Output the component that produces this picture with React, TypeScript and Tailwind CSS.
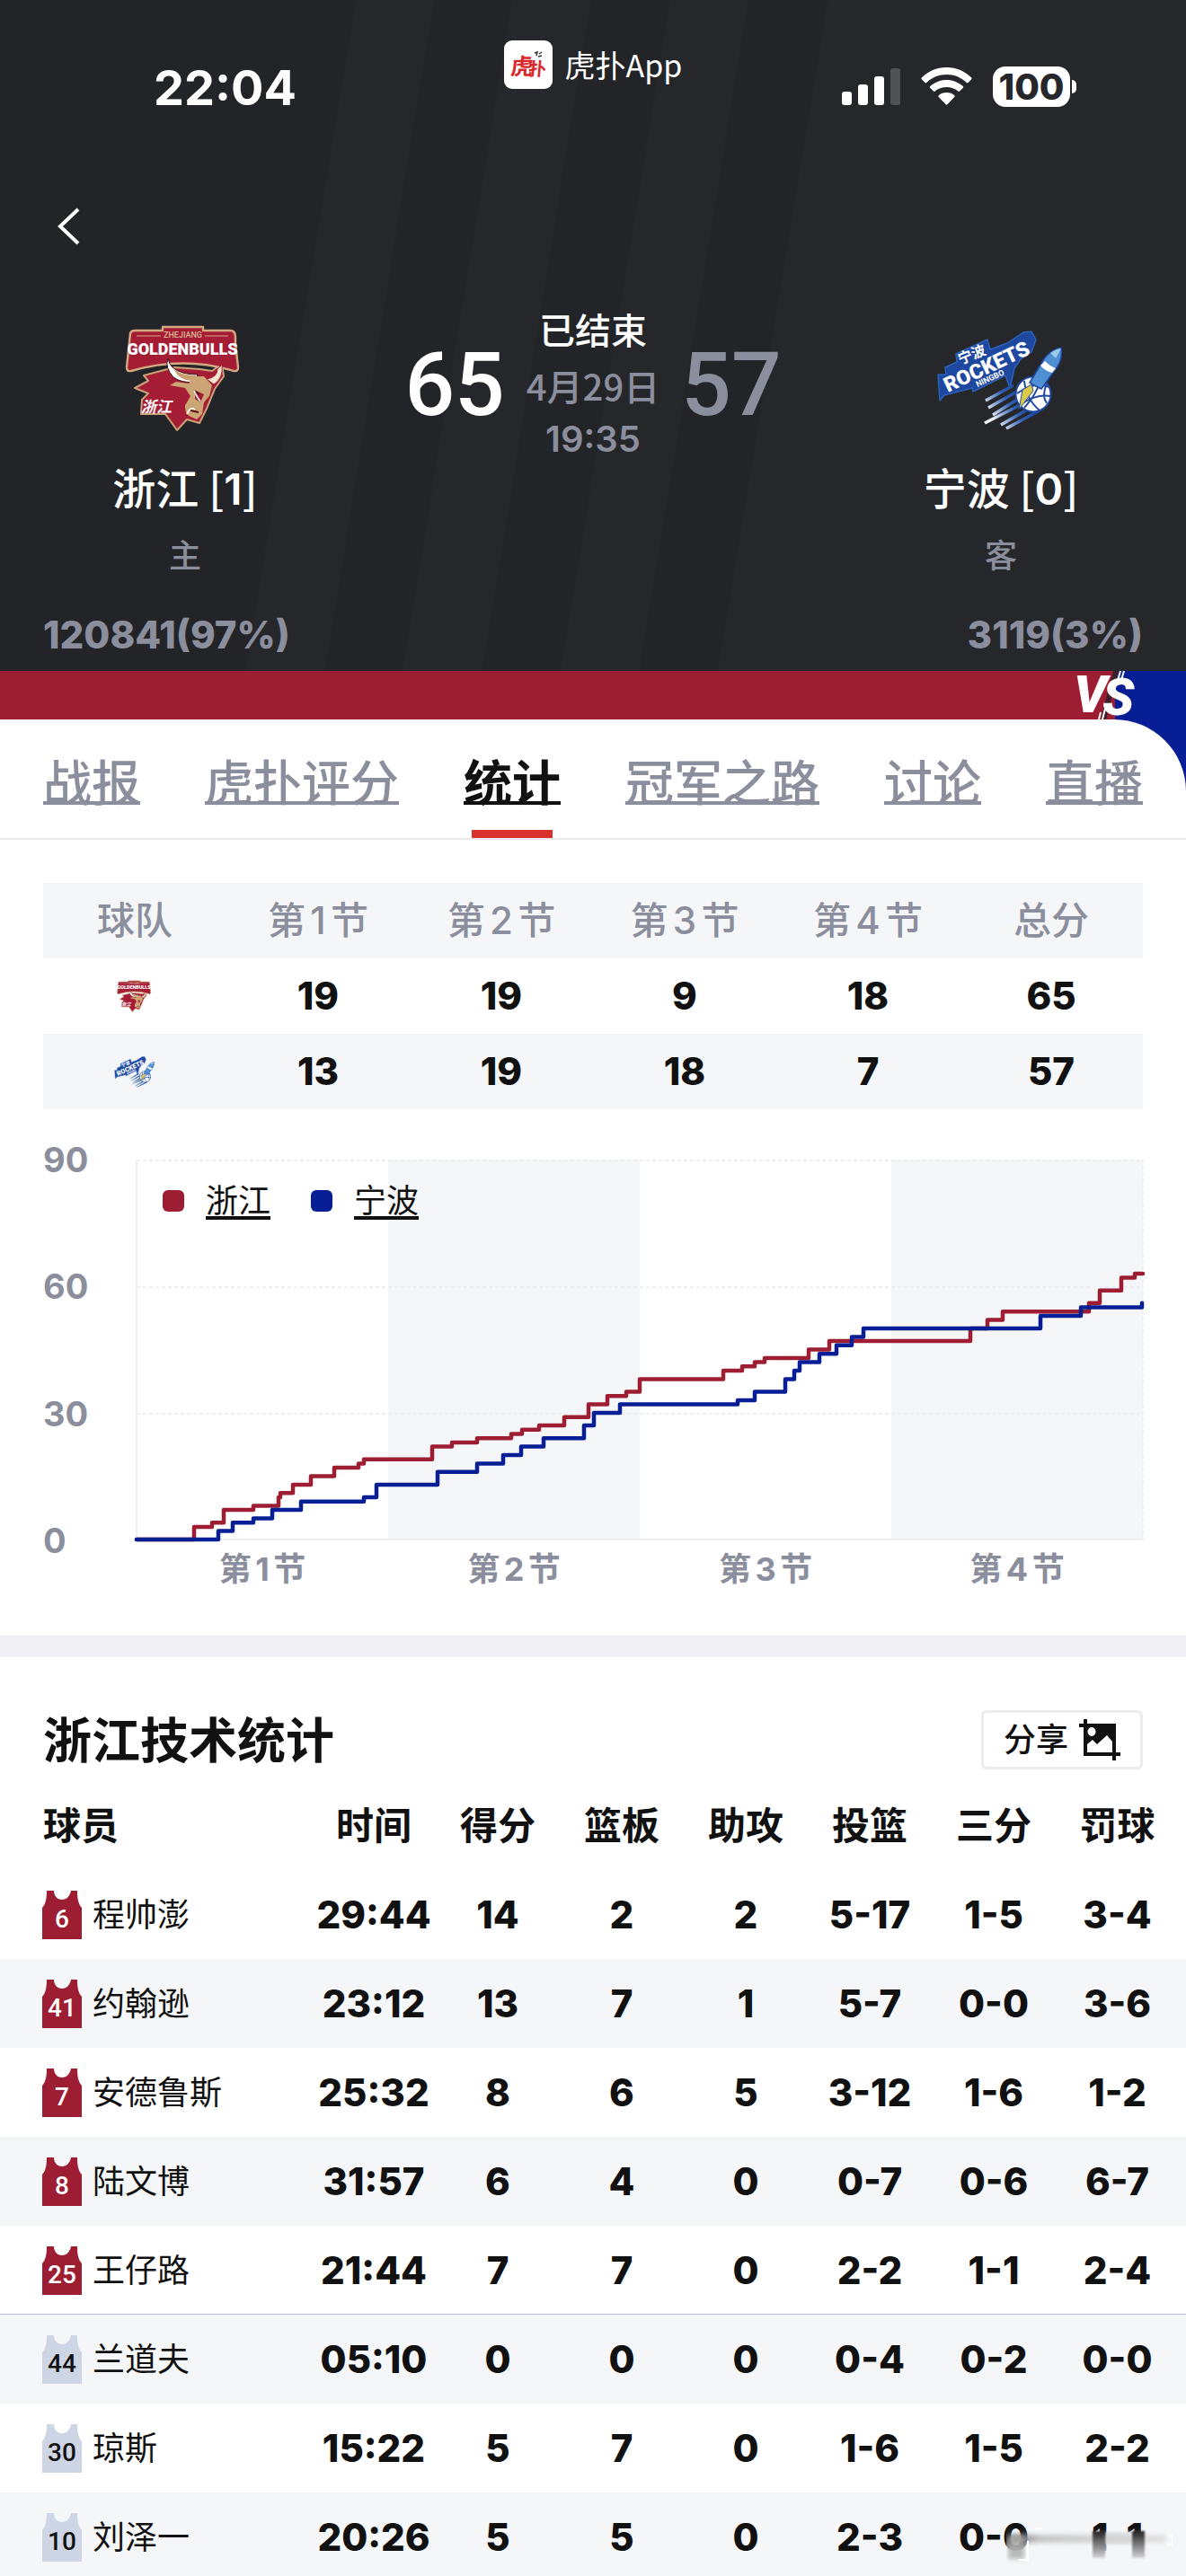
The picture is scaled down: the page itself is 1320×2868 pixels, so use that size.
import type { ReactNode } from "react";

const TABS = ["战报", "虎扑评分", "统计", "冠军之路", "讨论", "直播"];
const ACTIVE_TAB = "统计";

const QUARTERS = ["第1节", "第2节", "第3节", "第4节"];

const QUARTER_SCORES = [
  { team: "浙江", home: true, scores: [19, 19, 9, 18, 65] },
  { team: "宁波", home: false, scores: [13, 19, 18, 7, 57] },
];

const STAT_COLUMNS = ["时间", "得分", "篮板", "助攻", "投篮", "三分", "罚球"];

const PLAYERS = [
  { no: 6, name: "程帅澎", starter: true, stats: ["29:44", "14", "2", "2", "5-17", "1-5", "3-4"] },
  { no: 41, name: "约翰逊", starter: true, stats: ["23:12", "13", "7", "1", "5-7", "0-0", "3-6"] },
  { no: 7, name: "安德鲁斯", starter: true, stats: ["25:32", "8", "6", "5", "3-12", "1-6", "1-2"] },
  { no: 8, name: "陆文博", starter: true, stats: ["31:57", "6", "4", "0", "0-7", "0-6", "6-7"] },
  { no: 25, name: "王仔路", starter: true, stats: ["21:44", "7", "7", "0", "2-2", "1-1", "2-4"] },
  { no: 44, name: "兰道夫", starter: false, stats: ["05:10", "0", "0", "0", "0-4", "0-2", "0-0"] },
  { no: 30, name: "琼斯", starter: false, stats: ["15:22", "5", "7", "0", "1-6", "1-5", "2-2"] },
  { no: 10, name: "刘泽一", starter: false, stats: ["20:26", "5", "5", "0", "2-3", "0-0", "1-1"] },
];

// [x on the time axis (0-1120), total score from there on]
const HOME_STEPS: [number, number][] = [
  [64, 3], [84, 4], [97, 7], [130, 8], [158, 10], [160, 11], [174, 13], [194, 15],
  [220, 17], [247, 18], [253, 19], [329, 22], [351, 23], [379, 24], [417, 25],
  [429, 26], [448, 27], [476, 29], [503, 32], [524, 34], [545, 35], [560, 38],
  [653, 40], [674, 41], [688, 42], [699, 43], [748, 45], [771, 47], [928, 50],
  [947, 52], [964, 54], [1060, 56], [1072, 59], [1096, 62], [1111, 63], [1120, 63],
];

const AWAY_STEPS: [number, number][] = [
  [91, 2], [107, 4], [130, 5], [151, 7], [183, 9], [253, 10], [267, 13], [335, 16],
  [379, 18], [408, 20], [428, 22], [453, 24], [498, 27], [509, 30], [538, 32],
  [669, 33], [688, 35], [722, 38], [732, 40], [738, 42], [760, 44], [779, 46],
  [796, 48], [809, 50], [1006, 53], [1051, 55], [1119, 56],
];

function stepPath(steps: [number, number][]) {
  const y = (v: number) => 423 - v * 4.7;
  return steps.reduce((d, [x, v]) => `${d} H${x} V${y(v)}`, "M0 423");
}

function BullsLogo({ className }: { className?: string }) {
  return (
    <svg className={className} viewBox="0 0 160 140" role="img" aria-label="浙江">
      <path d="M68 58 L34 67 L39 73 L24 81 L39 87 L32 94 L31 110 L58 110 L71 128 L82 116 L96 120 L104 104 L113 82 L123 68 L121 54 L110 62 L96 60 Z" fill="#a51d35" stroke="#c9a277" strokeWidth="2" strokeLinejoin="round" />
      <path d="M19 20 Q20 17 24 17 L55 17 L55 13 L100 13 L100 17 L130 17 Q136 17 136 24 L136 31 L139 58 Q139 63 134 62 Q78 45 20 62 Q15 63 15 58 Z" fill="#a51d35" stroke="#d3a982" strokeWidth="2.4" strokeLinejoin="round" />
      <path d="M26 23 H53 M102 23 H128" stroke="#d3a982" strokeWidth="1.2" />
      <text x="77.5" y="25" textAnchor="middle" fontSize="9" fill="#dbb793" className="font-['Roboto',sans-serif] font-medium">ZHEJIANG</text>
      <text x="77" y="44" textAnchor="middle" fontSize="18" fill="#fff" className="font-['Roboto',sans-serif] font-black">GOLDENBULLS</text>
      <path d="M61 48 Q57 58 67 69 Q77 76 90 74 L94 66 Q75 66 66 58 Q62 54 61 48 Z" fill="#fff" stroke="#3b1217" strokeWidth="1" />
      <path d="M67 60 Q76 67 92 67 L89 73 Q75 74 67 60 Z" fill="#c9a06f" />
      <path d="M121 55 Q123 70 112 77 L104 71 Q116 69 116 60 Z" fill="#f4e4cf" stroke="#a51d35" strokeWidth="1" />
      <path d="M89 68 L101 68 L110 78 L107 90 L101 97 L99 110 L93 116 L84 112 L78 104 L86 90 L80 81 L63 78 L70 74 L84 76 Z" fill="#cba674" />
      <path d="M67 83 Q79 79 83 91 Q78 98 81 108 L72 116 L66 102 Z M92 84 L101 88 L97 97 L91 93 Z" fill="#a51d35" />
      <path d="M90 84 L96 88 M86 106 L95 108" stroke="#5c0f1d" strokeWidth="2" />
      <path d="M90 84 Q93 91 97 96 M82 110 Q86 101 91 105" stroke="#fff" strokeWidth="1.6" fill="none" />
      <text x="31" y="108" fontSize="17" fill="#fff" className="font-['Noto_Sans_CJK_SC',sans-serif] font-bold italic">浙江</text>
    </svg>
  );
}

function RocketsLogo({ className }: { className?: string }) {
  return (
    <svg className={className} viewBox="0 0 170 130" role="img" aria-label="宁波">
      <defs>
        <linearGradient id="flame" x1="67" y1="118" x2="110" y2="86" gradientUnits="userSpaceOnUse">
          <stop offset="0" stopColor="#fff" />
          <stop offset="0.25" stopColor="#dfe9f6" />
          <stop offset="0.7" stopColor="#2f5fb0" />
          <stop offset="1" stopColor="#1e48a0" />
        </linearGradient>
      </defs>
      <path d="M15 61 L24 61 L23 53 L36 47 L35 38 L70 22 L73 33 L92 26 L110 14 L119 13 L124 22 L119 36 L107 44 L100 54 L95 76 L90 62 L54 80 L53 76 L22 84 L17 90 Z" fill="#1e48a0" stroke="#2c62b8" strokeWidth="1.5" strokeLinejoin="round" />
      <g fill="#fff">
        <text transform="translate(26 81) rotate(-25)" fontSize="23" className="font-['Roboto',sans-serif] font-black">ROCKETS</text>
        <text transform="translate(59 75) rotate(-25)" fontSize="9" className="font-['Roboto',sans-serif] font-bold">NINGBO</text>
        <text transform="translate(40 50) rotate(-22)" fontSize="16" className="font-['Noto_Sans_CJK_SC',sans-serif] font-bold">宁波</text>
      </g>
      <g stroke="url(#flame)" strokeWidth="3.6">
        <path d="M68 90 L99 73" />
        <path d="M71 98 L103 80" />
        <path d="M76 106 L106 87" />
        <path d="M67 115 L112 92" />
        <path d="M85 117 L118 98" />
        <path d="M91 121 L128 101" />
      </g>
      <circle cx="121" cy="83" r="19.5" fill="#fff" stroke="#1e48a0" strokeWidth="2" />
      <path d="M103 82 Q122 68 139 75 M107 94 Q125 82 141 85 M111 68 Q113 88 128 101 M130 66 Q124 84 111 98 M136 71 Q130 85 136 93" stroke="#1e48a0" strokeWidth="2" fill="none" />
      <path d="M105 100 L109 78 L119 72 L121 79 Z" fill="#d9c94a" stroke="#1e48a0" strokeWidth="1" />
      <path d="M117 70 L134 42 Q142 33 152 31 Q154 42 148 52 L130 77 L122 73 Z" fill="#4f8fd3" stroke="#1e48a0" strokeWidth="1.5" />
      <path d="M134 46 Q140 52 146 54 L142 59 Q134 57 129 51 Z" fill="#fff" />
      <path d="M140 37 Q147 32 152 32 L146 43 Z" fill="#9cc8ec" />
    </svg>
  );
}

function StatusBar() {
  return (
    <div className="grid h-[150px] grid-cols-3 items-start">
      <div className="pt-[66px] pl-[171px] text-[54px] leading-[64px] font-bold">22:04</div>
      <div className="flex items-center justify-center gap-[14px] pt-[45px]">
        <svg className="h-[54px] w-[54px]" viewBox="0 0 54 54" aria-hidden="true">
          <rect width="54" height="54" rx="9" fill="#fff" />
          <g transform="skewX(-5)">
            <text x="10" y="38" fontSize="25" fill="#d8282c" className="font-['Noto_Sans_CJK_SC',sans-serif] font-bold">虎</text>
            <text x="30" y="39" fontSize="20" fill="#d8282c" className="font-['Noto_Sans_CJK_SC',sans-serif] font-bold">扑</text>
          </g>
          <path d="M34 14 l3 -1 l-1 4 M39 15 l3 -2 M38 18 l4 -1" stroke="#333" strokeWidth="1.5" fill="none" />
        </svg>
        <span className="text-[34px] leading-[54px] font-['Noto_Sans_CJK_SC',sans-serif]">虎扑App</span>
      </div>
      <div className="flex items-center justify-end gap-[23px] pt-[74px] pr-[122px]">
        <svg className="h-[45px] w-[65px]" viewBox="0 0 65 45" fill="#fff" aria-hidden="true">
          <rect x="0" y="28" width="11" height="15" rx="3" />
          <rect x="18" y="20" width="11" height="23" rx="3" />
          <rect x="36" y="11" width="11" height="32" rx="3" />
          <rect x="54" y="2" width="11" height="41" rx="3" opacity="0.2" />
        </svg>
        <svg className="h-[45px] w-[57px]" viewBox="0 0 57 45" fill="#fff" aria-hidden="true">
          <path d="M28.500 1 C17.500 1 8 5.300 0.800 12.500 Q0 13.400 0.800 14.300 L4.500 18 Q5.300 18.800 6.200 18 C12 12.300 20 9 28.500 9 C37 9 45 12.300 50.800 18 Q51.700 18.800 52.500 18 L56.200 14.300 Q57 13.400 56.200 12.500 C49 5.300 39.500 1 28.500 1 Z" />
          <path d="M28.500 15 C21.500 15 15 17.700 10.200 22.100 Q9.300 23 10.200 23.900 L14 27.600 Q14.800 28.400 15.700 27.600 C19.200 24.600 23.600 23 28.500 23 C33.400 23 37.800 24.600 41.300 27.600 Q42.200 28.400 43 27.600 L46.800 23.900 Q47.700 23 46.800 22.100 C42 17.700 35.500 15 28.500 15 Z" />
          <path d="M28.500 29 C25 29 22 30.200 19.700 32.200 Q18.800 33 19.700 33.900 L27.600 42.300 Q28.500 43.200 29.400 42.300 L37.300 33.900 Q38.200 33 37.300 32.200 C35 30.200 32 29 28.500 29 Z" />
        </svg>
        <div className="flex items-center gap-[2px]">
          <span className="flex h-[45px] w-[86px] items-center justify-center rounded-[14px] bg-white text-[40px] leading-[45px] font-extrabold text-[#26272b]">100</span>
          <span className="h-[15px] w-[5px] rounded-r-full bg-white" />
        </div>
      </div>
    </div>
  );
}

function TeamColumn({ logo, name, wins, side }: { logo: ReactNode; name: string; wins: number; side: string }) {
  return (
    <div className="flex flex-1 flex-col items-center pt-3">
      {logo}
      <div className="mt-4 h-[68px] text-[48px] leading-[68px] font-medium font-['Noto_Sans_CJK_SC',sans-serif]">
        {name} [<span className="font-['Inter',sans-serif] font-semibold">{wins}</span>]
      </div>
      <div className="mt-5 text-[36px] leading-[48px] font-medium text-[#8b8e9c]">{side}</div>
    </div>
  );
}

function MatchHeader() {
  return (
    <header className="relative bg-[#232427] text-white">
      <svg className="absolute inset-0 h-full w-full" viewBox="0 0 1320 801" preserveAspectRatio="none" fill="#26272b" aria-hidden="true">
        <path d="M396 0 H483 L353 801 H264 Z M570 0 H658 L528 801 H439 Z M746 0 H833 L703 801 H615 Z M921 0 H1320 V801 H790 Z" />
      </svg>
      <div className="relative">
        <StatusBar />
        <div className="flex h-[189px] items-start px-12 pt-20">
          <button type="button" aria-label="返回" className="-ml-1 px-4">
            <svg className="h-[44px] w-[30px]" viewBox="0 0 30 44" fill="none" stroke="#fff" strokeWidth="4" aria-hidden="true">
              <path d="M27 3 L7 22 L27 41" />
            </svg>
          </button>
        </div>
        <div className="flex items-start">
          <TeamColumn logo={<BullsLogo className="h-[140px] w-[160px]" />} name="浙江" wins={1} side="主" />
          <div className="flex w-[496px] items-center justify-center gap-6">
            <span className="text-[98px] leading-[120px] font-medium font-['Roboto',sans-serif]">65</span>
            <div className="text-center text-[40px] leading-[60px] font-medium text-[#8b8e9c]">
              <div className="text-white">已结束</div>
              <div className="whitespace-nowrap font-['Noto_Sans_CJK_SC',sans-serif]">4月29日</div>
              <div className="font-semibold">19:35</div>
            </div>
            <span className="text-[98px] leading-[120px] font-medium text-[#8b8e9c] font-['Roboto',sans-serif]">57</span>
          </div>
          <TeamColumn logo={<RocketsLogo className="h-[140px] w-[170px]" />} name="宁波" wins={0} side="客" />
        </div>
        <div className="flex justify-between px-12 pt-10 pb-4 text-[42px] leading-[48px] font-extrabold text-[#8b8e9c]">
          <span>120841(97%)</span>
          <span>3119(3%)</span>
        </div>
      </div>
      <div className="relative flex h-[54px] bg-[#081e95]">
        <div className="w-[94%] bg-[#9d1e33]" />
        <svg className="absolute -top-2 right-[43px] h-[70px] w-[84px]" viewBox="0 -8 84 70" role="img" aria-label="VS">
          <path d="M52 0 L38 54 H32 L46 0 Z" fill="#3a2028" />
          <g className="font-['Roboto',sans-serif] font-black italic" fill="#fff" fontSize="58">
            <text x="2" y="46">V</text>
            <text x="34" y="49">S</text>
          </g>
          <path d="M54 0 L50 14 M37 42 L34 54 M58 0 L55 10 M32 46 L30 54" stroke="#fff" strokeWidth="2" />
        </svg>
      </div>
    </header>
  );
}

function TabBar() {
  return (
    <div className="relative bg-[#081e95]">
      <nav className="rounded-tr-[80px] border-b-2 border-[#ebebee] bg-white">
        <ul className="flex justify-between px-12">
          {TABS.map((tab) => {
            const active = tab === ACTIVE_TAB;
            return (
              <li key={tab} className="relative flex h-[132px] items-center pt-3">
                <a
                  href="#"
                  aria-current={active ? "page" : undefined}
                  className={
                    active
                      ? "text-[54px] leading-[72px] font-bold text-[#111] underline decoration-4 underline-offset-0 [text-decoration-skip-ink:none]"
                      : "text-[54px] leading-[72px] font-medium text-[#8b8e9c] underline decoration-4 underline-offset-0 [text-decoration-skip-ink:none]"
                  }
                >
                  {tab}
                </a>
                {active && <span className="absolute bottom-0 left-1/2 h-[9px] w-[90px] -translate-x-1/2 bg-[#d8302b]" />}
              </li>
            );
          })}
        </ul>
      </nav>
    </div>
  );
}

function QuarterTable() {
  return (
    <table className="w-full table-fixed text-center">
      <thead>
        <tr className="h-[84px] bg-[#f5f6f8] text-[42px] leading-[56px] text-[#8b8e9c] [text-autospace:normal]">
          {["球队", ...QUARTERS, "总分"].map((label) => (
            <th key={label} scope="col" className="p-0 font-medium">{label}</th>
          ))}
        </tr>
      </thead>
      <tbody>
        {QUARTER_SCORES.map(({ team, home, scores }) => (
          <tr key={team} className="h-[84px] text-[42px] leading-[56px] font-extrabold even:bg-[#f5f6f8]">
            <th scope="row" className="p-0">
              {home ? <BullsLogo className="mx-auto h-[42px] w-[54px]" /> : <RocketsLogo className="mx-auto h-[42px] w-[54px]" />}
            </th>
            {scores.map((score, i) => (
              <td key={i} className="p-0">{score}</td>
            ))}
          </tr>
        ))}
      </tbody>
    </table>
  );
}

function ScoreChart() {
  return (
    <div className="mt-14 text-[#8b8e9c]">
      <div className="flex h-[424px]">
        <div className="-my-6 flex w-[104px] flex-col justify-between text-[38px] leading-[48px] font-bold">
          <span>90</span>
          <span>60</span>
          <span>30</span>
          <span>0</span>
        </div>
        <div className="relative flex-1">
          <svg className="h-full w-full overflow-visible" viewBox="0 0 1120 424" preserveAspectRatio="none" fill="none" role="img" aria-label="得分走势">
            <path d="M280 0 H560 V423 H280 Z M840 0 H1120 V423 H840 Z" fill="#f5f6f8" />
            <path d="M0 1 H1120 M0 142 H1120 M0 283 H1120 M1120 0 V423" stroke="#eeeff2" strokeWidth="2" strokeDasharray="4 3" />
            <path d="M0 0 V423 H1120" stroke="#efeff1" strokeWidth="2" />
            <path d={stepPath(HOME_STEPS)} stroke="#9d1e33" strokeWidth="4.5" strokeLinecap="round" strokeLinejoin="round" />
            <path d={stepPath(AWAY_STEPS)} stroke="#081e95" strokeWidth="4.5" strokeLinecap="round" strokeLinejoin="round" />
          </svg>
          <div className="absolute top-5 left-[29px] flex gap-[45px] text-[36px] leading-[52px] text-[#111]">
            <span className="flex items-center gap-6">
              <i className="h-6 w-6 rounded-md bg-[#9d1e33]" />
              <span className="underline decoration-4 underline-offset-4 [text-decoration-skip-ink:none]">浙江</span>
            </span>
            <span className="flex items-center gap-6">
              <i className="h-6 w-6 rounded-md bg-[#081e95]" />
              <span className="underline decoration-4 underline-offset-4 [text-decoration-skip-ink:none]">宁波</span>
            </span>
          </div>
        </div>
      </div>
      <div className="mt-2 grid grid-cols-4 pl-[104px] text-center text-[36px] leading-[48px] font-bold [text-autospace:normal]">
        {QUARTERS.map((quarter) => (
          <span key={quarter}>{quarter}</span>
        ))}
      </div>
    </div>
  );
}

function Jersey({ no, starter }: { no: number; starter: boolean }) {
  return (
    <svg className="h-[54px] w-[44px] shrink-0" viewBox="0 0 44 54" aria-hidden="true">
      <path
        d="M5 0 H13 C13 6 17 10 22 10 C27 10 31 6 32 0 H39 C39 8 40 15 44 19 V54 H0 V19 C4 15 5 8 5 0 Z"
        fill={starter ? "#9d1e33" : "#ced5e5"}
      />
      <text
        x="22"
        y="41"
        textAnchor="middle"
        fontSize="28"
        fill={starter ? "#fff" : "#111"}
        className="font-['Roboto',sans-serif] font-medium"
      >
        {no}
      </text>
    </svg>
  );
}

function Smudge() {
  return (
    <svg className="absolute top-[34px] right-[15px] h-[50px] w-[185px]" viewBox="0 0 185 50" aria-hidden="true">
      <defs>
        <linearGradient id="fade" x1="0" y1="0" x2="0" y2="1">
          <stop offset="0" stopColor="#f5f6f8" stopOpacity="0" />
          <stop offset="0.3" stopColor="#f5f6f8" stopOpacity="0.15" />
          <stop offset="0.8" stopColor="#f5f6f8" stopOpacity="1" />
        </linearGradient>
        <linearGradient id="streak" x1="0" y1="0" x2="1" y2="0">
          <stop offset="0" stopColor="#555" />
          <stop offset="0.2" stopColor="#bbb" />
          <stop offset="1" stopColor="#ddd" />
        </linearGradient>
        <linearGradient id="digit" x1="0" y1="0" x2="0" y2="1">
          <stop offset="0" stopColor="#222" />
          <stop offset="1" stopColor="#d5d5d7" />
        </linearGradient>
        <filter id="soften" x="-10%" y="-50%" width="120%" height="200%">
          <feGaussianBlur stdDeviation="2.5" />
        </filter>
        <filter id="edge" x="-20%" y="-20%" width="140%" height="140%">
          <feGaussianBlur stdDeviation="1" />
        </filter>
      </defs>
      <rect y="4" width="185" height="44" fill="url(#fade)" />
      <rect x="110" y="10" width="30" height="14" fill="#e4e5e7" filter="url(#edge)" />
      <rect x="4" y="13" width="174" height="9" fill="url(#streak)" opacity="0.8" filter="url(#soften)" />
      <rect x="2" y="14" width="18" height="26" fill="#aaa" opacity="0.8" filter="url(#soften)" />
      <rect x="96" y="9" width="14" height="30" fill="url(#digit)" filter="url(#edge)" />
      <rect x="140" y="9" width="14" height="30" fill="url(#digit)" filter="url(#edge)" />
      <path d="M14 41 H24 V20 M32 6 H40 M180 14 H185 V24 H179" stroke="#fff" strokeWidth="2" fill="none" />
    </svg>
  );
}

function PlayerStats() {
  return (
    <section className="pt-[57px]">
      <div className="flex items-center justify-between px-12">
        <h2 className="pt-1 text-[54px] leading-[66px] font-bold">浙江技术统计</h2>
        <button type="button" className="flex h-[66px] items-center gap-3 rounded-md border-[3px] border-[#ececec] px-[22px] text-[36px] leading-[48px] font-medium">
          分享
          <svg className="h-[46px] w-[46px]" viewBox="0 0 46 46" fill="#111" aria-hidden="true">
            <path fillRule="evenodd" d="M5 0 H9 V5 H41 V37 H46 V41 H41 V46 H37 V41 H5 V9 H0 V5 H5 Z M9 28 L15 23 L20 28 L31 18 L37 25 V37 H9 Z M14 9 A4.500 5 0 1 0 14 19 A4.500 5 0 1 0 14 9 Z" />
          </svg>
        </button>
      </div>
      <table className="mt-3 w-full table-fixed text-center text-[42px] leading-[56px]">
        <colgroup>
          <col className="w-[347px]" />
          {STAT_COLUMNS.map((label, i) => (
            <col key={label} className={i < STAT_COLUMNS.length - 1 ? "w-[138px]" : undefined} />
          ))}
        </colgroup>
        <thead>
          <tr className="h-[98px] font-bold">
            <th scope="col" className="p-0 pl-12 text-left">球员</th>
            {STAT_COLUMNS.map((label) => (
              <th key={label} scope="col" className="p-0 last:pr-2">{label}</th>
            ))}
          </tr>
        </thead>
        <tbody className="font-extrabold">
          {PLAYERS.map(({ no, name, starter, stats }, row) => (
            <tr
              key={name}
              className={
                row > 0 && !starter && PLAYERS[row - 1].starter
                  ? "h-[99px] even:bg-[#f5f6f8] shadow-[0_-1px_0_#b9bcc6]"
                  : "h-[99px] even:bg-[#f5f6f8]"
              }
            >
              <th scope="row" className="p-0 pl-[47px]">
                <span className="flex items-center gap-3 text-[36px] leading-[54px] font-normal">
                  <Jersey no={no} starter={starter} />
                  {name}
                </span>
              </th>
              {stats.map((value, i) => (
                <td key={i} className="relative p-0 last:pr-2">
                  {value}
                  {row === PLAYERS.length - 1 && i === stats.length - 1 && <Smudge />}
                </td>
              ))}
            </tr>
          ))}
        </tbody>
      </table>
    </section>
  );
}

export default function App() {
  return (
    <div className="h-screen overflow-x-hidden overflow-y-auto bg-white text-[#111] font-['Inter','Noto_Sans_CJK_SC',sans-serif] [scrollbar-width:none]">
      <MatchHeader />
      <TabBar />
      <main>
        <section className="px-12 pt-12 pb-[50px]">
          <QuarterTable />
          <ScoreChart />
        </section>
        <div className="h-6 bg-[#f0f0f4]" />
        <PlayerStats />
      </main>
    </div>
  );
}
